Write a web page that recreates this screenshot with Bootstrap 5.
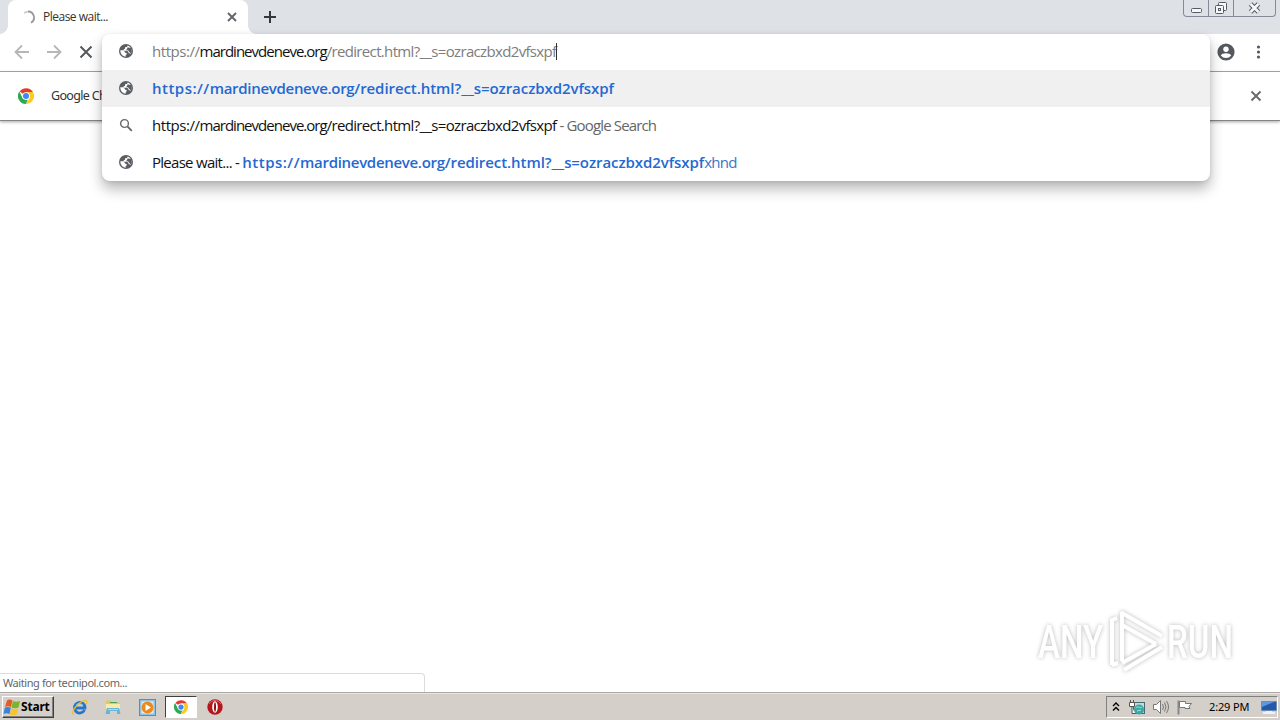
<!DOCTYPE html>
<html lang="en">
<head>
    <meta charset="UTF-8">
    <meta name="viewport" content="width=device-width, initial-scale=1.0">
    <title>Please wait...</title>
    <link href="https://cdn.jsdelivr.net/npm/bootstrap@5.3.0/dist/css/bootstrap.min.css" rel="stylesheet">
    <style>
        body { width: 1280px; height: 720px; overflow: hidden; font-family: "Noto Sans", "Liberation Sans", sans-serif; font-size: 12px; line-height: 16px; color: #333; background: #fff; }
        svg { display: block; flex: none; }
        button { border: 0; background: none; padding: 0; color: inherit; }

        /* Tab strip */
        .tab-strip { height: 34px; background: #dee1e6; }
        .page-tab { width: 240px; height: 34px; margin-left: 8px; padding: 0 10px 0 13px; background: #fff; border-radius: 8px 8px 0 0; position: relative; }
        .page-tab::before, .page-tab::after { content: ""; position: absolute; bottom: 0; width: 8px; height: 8px; }
        .page-tab::before { left: -8px; background: radial-gradient(circle at 0 0, transparent 7.5px, #fff 8px); }
        .page-tab::after { right: -8px; background: radial-gradient(circle at 100% 0, transparent 7.5px, #fff 8px); }
        .tab-title { margin-left: 7px; font-family: "Open Sans", sans-serif; font-size: 12px; letter-spacing: -.5px; }
        .window-buttons { width: 93px; height: 17px; margin-right: 4px; border: 1px solid #858a96; border-top: 0; border-radius: 0 0 4px 4px; }
        .window-buttons button { height: 16px; border-right: 1px solid #858a96; }
        .window-buttons button:last-child { border-right: 0; }

        /* Toolbar and info bar */
        .toolbar { height: 38px; padding: 0 15px 2px 14px; border-bottom: 1px solid #a9a9a9; background: #fff; }
        .info-bar { height: 49px; padding: 0 18px 1px; border-bottom: 1px solid #858585; box-shadow: 0 1px 3px rgba(0,0,0,.35); }
        .info-text { margin-left: 17px; font-size: 12.5px; letter-spacing: -.68px; padding-top: 1px; }

        /* Address bar with its suggestions */
        .omnibox { position: absolute; left: 102px; top: 34px; width: 1108px; height: 147px; background: #fff; border-radius: 8px; box-shadow: 0 8px 14px rgba(0,0,0,.28), 0 1px 4px rgba(0,0,0,.1); font-family: "Open Sans", "Noto Sans", sans-serif; font-size: 15px; color: #111; }
        .omni-row { height: 37px; padding: 0 0 2px 16px; white-space: pre; }
        .omni-row svg { margin-right: 18px; }
        .omni-row:first-child { height: 36px; }
        .omni-selected { background: #f0f0f0; }
        .omni-scheme { letter-spacing: -.46px; }
        .omni-host { letter-spacing: -.98px; }
        .omni-path { letter-spacing: -.66px; }
        .omni-match { font-weight: 600; color: #2468d2; }
        .omni-match .omni-scheme { letter-spacing: .48px; }
        .omni-match .omni-host { letter-spacing: -.3px; }
        .omni-match .omni-path { letter-spacing: -.07px; }
        .omni-dim { color: #7d7d7d; }
        .omni-desc { color: #666; letter-spacing: -.85px; }
        .omni-page { letter-spacing: -.72px; }
        .omni-rest { color: #3a76c8; letter-spacing: -.7px; }
        .omni-caret { width: 1px; height: 17px; background: #333; }

        /* Page area */
        .status-bubble { width: 425px; height: 19px; padding: 1px 3px 0; border: 1px solid #dcdcdc; border-left: 0; border-bottom: 0; border-radius: 0 4px 0 0; font-size: 11px; color: #666; letter-spacing: -.42px; }
        .watermark { position: absolute; left: 1030px; top: 604px; filter: drop-shadow(0 0 2px rgba(0,0,0,.28)); }
        .watermark text { font-family: Roboto, sans-serif; font-size: 46px; font-weight: 500; }

        /* Taskbar */
        .task-bar { height: 28px; background: #d4cfc8; border-top: 1px solid #aaa9a4; box-shadow: inset 0 1px #e9e7e2; padding: 3px 2px 1px 2px; color: #000; }
        .start-button { width: 52px; height: 22px; border: 1px solid; border-color: #fff #404040 #404040 #fff; box-shadow: inset -1px -1px #808080; font-weight: 700; font-size: 12px; letter-spacing: -.2px; }
        .launch-item { width: 34px; height: 22px; }
        .launch-active { background: #fff; border: 1px solid; border-color: #404040 #fff #fff #404040; width: 32px; margin: 0 1px; }
        .tray { width: 172px; height: 22px; border: 1px solid; border-color: #808080 #fff #fff #808080; padding-left: 5px; font-size: 11px; }
        .clock { margin-left: 16px; letter-spacing: -.15px; }
    </style>
</head>
<body>
<!-- Shared icons -->
<svg width="0" height="0" class="position-absolute">
    <symbol id="globe" viewBox="0 0 24 24">
        <circle cx="12" cy="12" r="10.500" fill="#5a5d61"/>
        <path fill="#fff" d="M3.500 11h5l2.500 3.500 2 .5v2l-1.500 1.500V20.500C7 20.500 3.300 16.500 3.500 11zM14.500 3.800l-1 2.200h-2.500L10.500 8.500 8.500 9.500v2h5l2 1.500.5 2.500h2l1 1c2.800-5 .5-11-4.500-12.700z"/>
        <path fill="#5a5d61" d="M14.500 6.500 20 8l.5 6-2 1.500-1.500-2-2-2.500h-3l1.500-2z"/>
    </symbol>
    <symbol id="chrome" viewBox="0 0 24 24">
        <path fill="#e33b2e" d="M12 12 2.500 5.200A12 12 0 0 1 22.400 6H12z"/>
        <path fill="#fbc926" d="M12 6h10.400A12 12 0 0 1 11.700 24L17.200 15z"/>
        <path fill="#2da94f" d="M2 5.300 6.800 15 12 18l2.600-.5L11.700 24A12 12 0 0 1 2 5.300z"/>
        <circle cx="12" cy="12" r="5.800" fill="#fff"/>
        <circle cx="12" cy="12" r="4.500" fill="#4285f4"/>
    </symbol>
</svg>

<div class="d-flex flex-column vh-100 position-relative">
    <!-- Tab strip -->
    <div class="tab-strip d-flex">
        <div class="page-tab d-flex align-items-center">
            <svg width="15" height="15" viewBox="0 0 15 15" fill="none" stroke="#9b9b9b" stroke-width="1.800"><path d="M7 1.500a6 6 0 0 1 3 11.200"/><path d="M3 2.800 7 1.500" stroke="#ccc"/></svg>
            <span class="tab-title">Please wait...</span>
            <button class="ms-auto" aria-label="Close tab"><svg width="12" height="12" viewBox="0 0 12 12" stroke="#5f6368" stroke-width="1.800"><path d="m2 2 8 8M10 2l-8 8"/></svg></button>
        </div>
        <button class="ms-3" aria-label="New tab"><svg width="12" height="12" viewBox="0 0 12 12" stroke="#35373b" stroke-width="2"><path d="M6 0v12M0 6h12"/></svg></button>
        <div class="window-buttons d-flex ms-auto">
            <button class="d-flex justify-content-center" style="width: 25px" aria-label="Minimize"><svg width="13" height="16"><rect x="1.500" y="8.500" width="10" height="4" rx="1" fill="#f6f7f8" stroke="#555b66"/></svg></button>
            <button class="d-flex justify-content-center" style="width: 25px" aria-label="Restore"><svg width="14" height="16" fill="#f6f7f8" stroke="#555b66"><rect x="4.500" y="2.500" width="8" height="8" rx="1"/><rect x="1.500" y="5.500" width="8" height="8" rx="1"/><rect x="4.500" y="8.500" width="2" height="2"/></svg></button>
            <button class="d-flex justify-content-center flex-fill" aria-label="Close window"><svg width="13" height="16" fill="none"><path d="m2.500 4 8 8M10.500 4l-8 8" stroke="#555b66" stroke-width="4.600"/><path d="m2.500 4 8 8M10.500 4l-8 8" stroke="#f6f7f8" stroke-width="2.600"/></svg></button>
        </div>
    </div>

    <!-- Toolbar -->
    <div class="toolbar d-flex align-items-center gap-3">
        <svg width="16" height="16" viewBox="0 0 16 16" fill="none" stroke="#b5b6b8" stroke-width="1.800"><path d="M15 8H2M8 1.500 1.500 8 8 14.500"/></svg>
        <svg width="16" height="16" viewBox="0 0 16 16" fill="none" stroke="#b5b6b8" stroke-width="1.800"><path d="M1 8h13M8 1.500 14.500 8 8 14.500"/></svg>
        <svg width="16" height="16" viewBox="0 0 16 16" fill="none" stroke="#55585c" stroke-width="2"><path d="m2.500 2.500 11 11M13.500 2.500l-11 11"/></svg>
        <svg class="ms-auto" width="18" height="18" viewBox="0 0 18 18"><circle cx="9" cy="9" r="8.600" fill="#55585e"/><circle cx="9" cy="6.200" r="2.700" fill="#fff"/><path fill="#fff" d="M3.800 12.500C5 9.600 13 9.600 14.200 12.500a6.500 6.500 0 0 1-10.400 0z"/></svg>
        <svg width="14" height="16" viewBox="0 0 14 16" fill="#55585e"><circle cx="7.500" cy="3" r="1.600"/><circle cx="7.500" cy="8" r="1.600"/><circle cx="7.500" cy="13" r="1.600"/></svg>
    </div>

    <!-- Info bar -->
    <div class="info-bar d-flex align-items-center">
        <svg width="16" height="16"><use href="#chrome"/></svg>
        <span class="info-text">Google Chrome</span>
        <svg class="ms-auto" width="12" height="12" viewBox="0 0 12 12" stroke="#66696d" stroke-width="1.800"><path d="m1.500 1.500 9 9M10.500 1.500l-9 9"/></svg>
    </div>

    <!-- Page content -->
    <div class="flex-fill d-flex align-items-end">
        <div class="status-bubble">Waiting for tecnipol.com...</div>
    </div>

    <!-- Taskbar -->
    <div class="task-bar d-flex">
        <button class="start-button d-flex align-items-center">
            <svg width="18" height="17" viewBox="0 0 17 17"><path fill="#e45b24" d="M3.500 1.500c2-1.500 3.500-1 5.500 0L7.500 8C5.500 7 3.500 6.800 1.500 8z"/><path fill="#76b82a" d="M9.500 2c2 1 4.500 1 7 0L15 8.500c-2 1-5 1-7 0z"/><path fill="#3a83d6" d="M1.300 8.800c2-1.200 4-1 6 0L6 15c-2-1-4-1.200-6 0z"/><path fill="#f7c331" d="M7.900 9.300c2 1 5 1 7 0L13.300 15.500c-2 1-5 1-7 0z"/></svg>
            <span>Start</span>
        </button>
        <div class="d-flex ms-2">
            <div class="launch-item d-flex align-items-center justify-content-center">
                <svg width="17" height="17" viewBox="0 0 17 17" fill="none"><path d="M13.500 11A5.300 5.300 0 1 1 14 9H5" stroke="#2376c8" stroke-width="2.800"/><path d="M12 6A5 5 0 0 0 5 6" stroke="#68bdf0"/><path d="M3 15.500C-1 15 5 5 12 2c5-2 4 2 3 3" stroke="#f0bd2e" stroke-width="1.300"/></svg>
            </div>
            <div class="launch-item d-flex align-items-center justify-content-center">
                <svg width="16" height="16" viewBox="0 0 16 16"><path fill="#e3c766" d="M1 1.500h5l1 2h8V12H1z"/><path fill="#f8eaa8" d="M1 5h14v5H1z"/><path fill="#66b6dc" d="M2 9h12l1.500 6H12v-3H5v3H.5z"/><path fill="#a9dcf0" d="M3 10h10v1H3z"/><path fill="#4fa353" d="M5 3h7v1H5z"/></svg>
            </div>
            <div class="launch-item d-flex align-items-center justify-content-center">
                <svg width="17" height="17" viewBox="0 0 17 17"><rect x=".5" y=".5" width="16" height="16" fill="#8fc3ea" stroke="#4a8ecb"/><rect x="2.500" y="2.500" width="12" height="12" fill="#d9edfa"/><circle cx="8.500" cy="8.500" r="5.900" fill="#ee8918"/><path fill="#fff" d="m6.500 5 5.500 3.500L6.500 12z"/></svg>
            </div>
            <div class="launch-item launch-active d-flex align-items-center justify-content-center">
                <svg width="14" height="14"><use href="#chrome"/></svg>
            </div>
            <div class="launch-item d-flex align-items-center justify-content-center">
                <svg width="16" height="16" viewBox="0 0 16 16"><circle cx="8" cy="8" r="7.700" fill="#b5161c"/><path d="M2 5a7 7 0 0 1 12 0" stroke="#e06a6a" fill="none"/><ellipse cx="8" cy="8" rx="2.800" ry="5.800" fill="#fff"/><ellipse cx="8" cy="8" rx="1" ry="4.800" fill="#8c1116"/></svg>
            </div>
        </div>
        <div class="tray d-flex align-items-center ms-auto">
            <svg width="8" height="12" viewBox="0 0 8 12" fill="none" stroke="#000" stroke-width="1.400"><path d="m1 5 3-3 3 3M1 9.500l3-3 3 3"/></svg>
            <svg class="ms-2" width="17" height="17" viewBox="0 0 17 17"><rect x="5.500" y="3.500" width="11" height="11" fill="#c8d8dc" stroke="#456b72"/><circle cx="11" cy="10.500" r="5" fill="#3aa6a5"/><path d="M8 9c2-3 4 1 6-1M9 12l4-1" stroke="#a8e6cf" fill="none"/><path fill="#fff" stroke="#555" d="M1.500 3.500h5v4h-5zM4 7.500v7h3M2.500 1v2M5.500 1v2"/></svg>
            <svg style="margin-left: 7px" width="17" height="16" viewBox="0 0 17 16" fill="none" stroke="#777"><path fill="#fff" d="M1.500 5.500h3l4-4v13l-4-4h-3z"/><path d="M10.500 5q2 3 0 6M12.500 3.500q3 4.500 0 9M14.500 2q4 6 0 12"/></svg>
            <svg style="margin-left: 7px" width="17" height="16" viewBox="0 0 17 16"><path d="M2.500 1.500v14" stroke="#888" stroke-width="2"/><path d="M3.500 2.500h6v2h6l-2.500 3 1 2h-5v-1h-5.500z" fill="#fff" stroke="#777"/></svg>
            <span class="clock">2:29 PM</span>
            <svg class="ms-auto" width="16" height="15" viewBox="0 0 16 15"><path fill="#2359a8" stroke="#6d8cb8" d="M.5 1.500h15v9H.5z"/><path fill="#5a9ae0" d="M1 2h12L1 7z"/><path fill="#eef1f5" d="M5 11h6v1h3v2H2v-2h3z"/></svg>
        </div>
    </div>

    <!-- Address bar -->
    <div class="omnibox">
        <div class="omni-row d-flex align-items-center">
            <svg width="16" height="16"><use href="#globe"/></svg>
            <span><span class="omni-scheme omni-dim">https://</span><span class="omni-host">mardinevdeneve.org</span><span class="omni-path omni-dim">/redirect.html?__s=ozraczbxd2vfsxpf</span></span>
            <span class="omni-caret"></span>
        </div>
        <div class="omni-row omni-selected d-flex align-items-center">
            <svg width="16" height="16"><use href="#globe"/></svg>
            <span class="omni-match"><span class="omni-scheme">https://</span><span class="omni-host">mardinevdeneve.org</span><span class="omni-path">/redirect.html?__s=ozraczbxd2vfsxpf</span></span>
        </div>
        <div class="omni-row d-flex align-items-center">
            <svg width="16" height="16" viewBox="0 0 16 16" fill="none" stroke="#66696d"><circle cx="6.500" cy="6.500" r="3.900" stroke-width="1.400"/><path d="m9.500 9.500 4.300 4.300" stroke-width="1.800"/></svg>
            <span><span class="omni-scheme">https://</span><span class="omni-host">mardinevdeneve.org</span><span class="omni-path">/redirect.html?__s=ozraczbxd2vfsxpf</span></span>
            <span class="omni-desc"> - Google Search</span>
        </div>
        <div class="omni-row d-flex align-items-center">
            <svg width="16" height="16"><use href="#globe"/></svg>
            <span class="omni-page">Please wait... - </span>
            <span class="omni-match"><span class="omni-scheme">https://</span><span class="omni-host">mardinevdeneve.org</span><span class="omni-path">/redirect.html?__s=ozraczbxd2vfsxpf</span></span>
            <span class="omni-rest">xhnd</span>
        </div>
    </div>

    <!-- Watermark -->
    <svg class="watermark" width="230" height="74" viewBox="0 0 230 74">
        <g fill="#fff">
            <text transform="translate(8 54) scale(.72 1)">ANY</text>
            <text transform="translate(137 54) scale(.72 1)">RUN</text>
        </g>
        <g fill="none" stroke="#fff" stroke-width="4" stroke-linejoin="round">
            <path d="M92 57V9l40 23M92 21l34 19M126 40 92 59M82 61V16l5-2M82 61l6-2M94 66l38-23"/>
        </g>
    </svg>
</div>

<script src="https://cdn.jsdelivr.net/npm/bootstrap@5.3.0/dist/js/bootstrap.bundle.min.js"></script>
</body>
</html>
